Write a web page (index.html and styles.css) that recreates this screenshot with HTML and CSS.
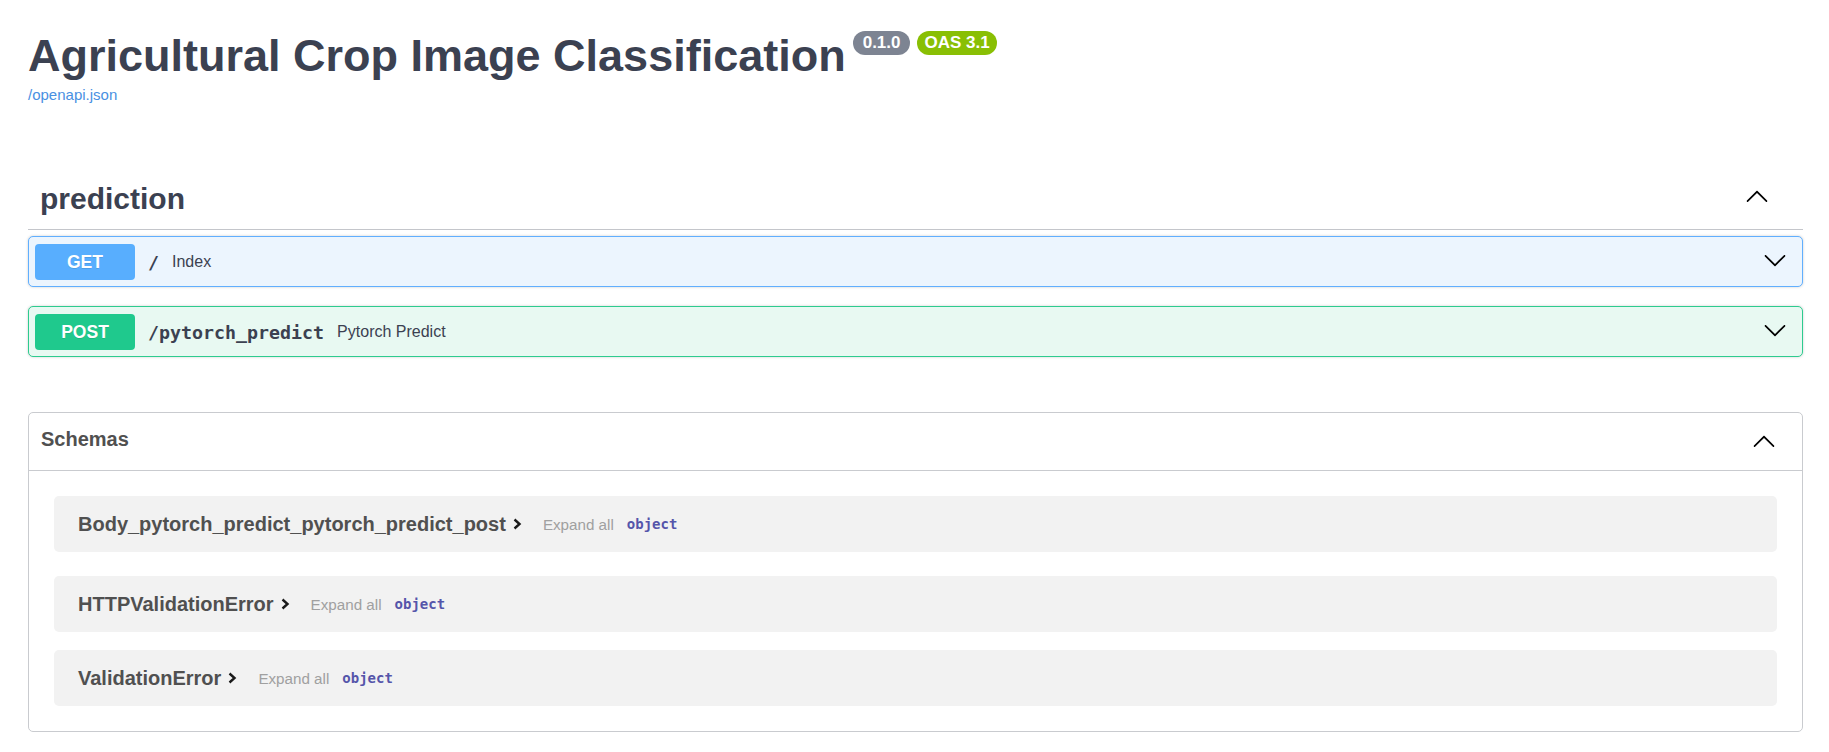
FILE: index.html
```html
<!DOCTYPE html>
<html lang="en">
<head>
<meta charset="utf-8">
<title>Agricultural Crop Image Classification - Swagger UI</title>
<link rel="stylesheet" href="styles.css">
</head>
<body>
<div class="wrapper">
  <div class="info">
    <div class="title-row">
      <h2 class="title">Agricultural Crop Image Classification</h2>
      <span class="badge badge-version">0.1.0</span>
      <span class="badge badge-oas">OAS 3.1</span>
    </div>
    <a class="spec-link" href="#">/openapi.json</a>
  </div>

  <section class="tag-section">
    <div class="tag-header">
      <span class="tag-name">prediction</span>
      <svg class="chev chev-up chev-tag" viewBox="0 0 20 20" width="24" height="24"><path d="M17.418 6.109c.272-.268.709-.268.979 0s.27.701 0 .969l-7.908 7.83c-.27.268-.707.268-.979 0l-7.908-7.830c-.27-.268-.27-.701 0-.969.271-.268.709-.268.979 0L10 13.25l7.418-7.141z"/></svg>
    </div>
    <div class="ops">
      <div class="opblock opblock-get">
        <span class="method">GET</span>
        <span class="path">/</span>
        <span class="desc">Index</span>
        <svg class="chev chev-op" viewBox="0 0 20 20" width="24" height="24"><path d="M17.418 6.109c.272-.268.709-.268.979 0s.27.701 0 .969l-7.908 7.83c-.27.268-.707.268-.979 0l-7.908-7.83c-.27-.268-.27-.701 0-.969.271-.268.709-.268.979 0L10 13.25l7.418-7.141z"/></svg>
      </div>
      <div class="opblock opblock-post">
        <span class="method">POST</span>
        <span class="path">/pytorch_predict</span>
        <span class="desc">Pytorch Predict</span>
        <svg class="chev chev-op" viewBox="0 0 20 20" width="24" height="24"><path d="M17.418 6.109c.272-.268.709-.268.979 0s.27.701 0 .969l-7.908 7.83c-.27.268-.707.268-.979 0l-7.908-7.83c-.27-.268-.27-.701 0-.969.271-.268.709-.268.979 0L10 13.25l7.418-7.141z"/></svg>
      </div>
    </div>
  </section>

  <section class="models">
    <div class="models-header">
      <span class="models-title">Schemas</span>
      <svg class="chev chev-up chev-models" viewBox="0 0 20 20" width="24" height="24"><path d="M17.418 6.109c.272-.268.709-.268.979 0s.27.701 0 .969l-7.908 7.83c-.27.268-.707.268-.979 0l-7.908-7.83c-.27-.268-.27-.701 0-.969.271-.268.709-.268.979 0L10 13.25l7.418-7.141z"/></svg>
    </div>
    <div class="models-body">
      <div class="model model-first">
        <span class="model-name">Body_pytorch_predict_pytorch_predict_post</span>
        <svg class="arrow-right" viewBox="0 0 10 14" width="10" height="14"><path d="M2.5 2.5 L7.5 7 L2.5 11.5"/></svg>
        <span class="expand">Expand all</span>
        <span class="type">object</span>
      </div>
      <div class="model model-second">
        <span class="model-name">HTTPValidationError</span>
        <svg class="arrow-right" viewBox="0 0 10 14" width="10" height="14"><path d="M2.5 2.5 L7.5 7 L2.5 11.5"/></svg>
        <span class="expand">Expand all</span>
        <span class="type">object</span>
      </div>
      <div class="model">
        <span class="model-name">ValidationError</span>
        <svg class="arrow-right" viewBox="0 0 10 14" width="10" height="14"><path d="M2.5 2.5 L7.5 7 L2.5 11.5"/></svg>
        <span class="expand">Expand all</span>
        <span class="type">object</span>
      </div>
    </div>
  </section>
</div>
</body>
</html>
```
FILE: styles.css
```css
* { box-sizing: border-box; }

html, body {
  margin: 0;
  padding: 0;
  background: #ffffff;
}

body {
  font-family: "Liberation Sans", Arial, sans-serif;
  color: #3b4151;
}

.wrapper {
  padding: 0 26px 0 28px;
}

/* ---------- info ---------- */
.info {
  padding-top: 30px;
}

.title-row {
  display: flex;
  align-items: flex-start;
  height: 52px;
}

.title {
  margin: 0;
  font-size: 45px;
  line-height: 52px;
  font-weight: 700;
  color: #3b4151;
  white-space: nowrap;
}

.badge {
  display: inline-block;
  margin-top: 1px;
  height: 24px;
  border-radius: 12px;
  font-size: 17px;
  line-height: 24px;
  font-weight: 700;
  color: #ffffff;
}

.badge-version {
  margin-left: 7px;
  padding: 0 10px;
  background: #7d8492;
}

.badge-oas {
  margin-left: 7px;
  padding: 0 7px;
  background: #89bf04;
}

.spec-link {
  display: block;
  margin-top: 4px;
  font-size: 15px;
  line-height: 18px;
  color: #4990e2;
  text-decoration: none;
}

/* ---------- tag section ---------- */
.tag-section {
  margin-top: 64px;
}

.tag-header {
  display: flex;
  align-items: center;
  justify-content: space-between;
  padding: 13px 34px 12px 12px;
  border-bottom: 1px solid #c4c6cb;
}

.tag-name {
  font-size: 30px;
  line-height: 36px;
  font-weight: 700;
  color: #3b4151;
}

.chev {
  display: block;
  flex: none;
  fill: #000000;
}

.chev-up {
  transform: rotate(180deg);
}

.chev-tag {
  margin-bottom: 5px;
}

.ops {
  margin-top: 6px;
}

.opblock {
  display: flex;
  align-items: center;
  padding: 7px 15px 6px 6px;
  border: 1px solid;
  border-radius: 5px;
  box-shadow: 0 0 3px rgba(0, 0, 0, 0.19);
  margin-bottom: 19px;
}

.opblock-get {
  background: #ecf5fe;
  border-color: #61affe;
}

.opblock-post {
  background: #e8f9f2;
  border-color: #2ecb8f;
}

.method {
  flex: none;
  width: 100px;
  height: 36px;
  border-radius: 4px;
  font-size: 17.5px;
  line-height: 36px;
  font-weight: 700;
  text-align: center;
  color: #ffffff;
  text-shadow: 0 1px 0 rgba(0, 0, 0, 0.1);
}

.opblock-get .method {
  background: #58aefe;
}

.opblock-post .method {
  background: #1fc98d;
}

.path {
  margin-left: 13px;
  margin-right: 13px;
  font-family: "DejaVu Sans Mono", "Liberation Mono", monospace;
  font-size: 18.3px;
  font-weight: 700;
  color: #3b4151;
}

.desc {
  flex: 1;
  font-size: 16px;
  color: #3b4151;
}

.chev-op {
  margin-bottom: 5px;
}

/* ---------- models ---------- */
.models {
  margin-top: 55px;
  border: 1px solid #c9cbcf;
  border-radius: 5px;
}

.models-header {
  display: flex;
  align-items: center;
  justify-content: space-between;
  height: 58px;
  padding: 0 26px 5px 12px;
  border-bottom: 1px solid #c9cbcf;
}

.models-title {
  font-size: 20px;
  line-height: 24px;
  font-weight: 700;
  color: #505050;
}

.chev-models {
  margin-top: 3px;
  margin-bottom: -3px;
}

.models-body {
  padding: 25px 25px 25px 25px;
}

.model {
  display: flex;
  align-items: center;
  height: 56px;
  padding-left: 24px;
  background: #f2f2f2;
  border-radius: 5px;
}

.model-first {
  margin-bottom: 24px;
}

.model-second {
  margin-bottom: 18px;
}

.model-name {
  font-size: 20px;
  font-weight: 700;
  color: #505050;
}

.arrow-right {
  display: block;
  flex: none;
  margin-left: 6px;
  fill: none;
  stroke: #1a1a1a;
  stroke-width: 2.4;
}

.expand {
  margin-left: 21px;
  font-size: 15.2px;
  color: #a0a0a0;
}

.type {
  margin-left: 13px;
  font-family: "DejaVu Sans Mono", "Liberation Mono", monospace;
  font-size: 14px;
  font-weight: 700;
  color: #55a;
}
```
